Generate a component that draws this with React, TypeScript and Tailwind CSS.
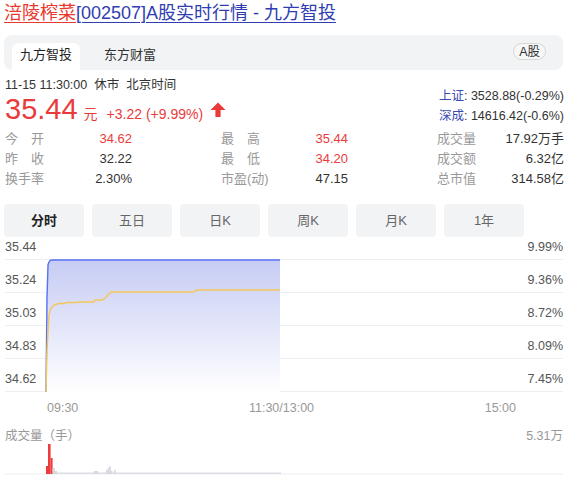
import React from 'react';

const FONT = '[font-family:"Liberation_Sans","Noto_Sans_CJK_SC",sans-serif]';

type Cell = { label: string; value: string; up?: boolean };

const stats: Cell[][] = [
  [
    { label: '今开', value: '34.62', up: true },
    { label: '最高', value: '35.44', up: true },
    { label: '成交量', value: '17.92万手' },
  ],
  [
    { label: '昨收', value: '32.22' },
    { label: '最低', value: '34.20', up: true },
    { label: '成交额', value: '6.32亿' },
  ],
  [
    { label: '换手率', value: '2.30%' },
    { label: '市盈(动)', value: '47.15' },
    { label: '总市值', value: '314.58亿' },
  ],
];

const periods = ['分时', '五日', '日K', '周K', '月K', '1年'];

const yRows = [
  { left: '35.44', right: '9.99%' },
  { left: '35.24', right: '9.36%' },
  { left: '35.03', right: '8.72%' },
  { left: '34.83', right: '8.09%' },
  { left: '34.62', right: '7.45%' },
];

// average price line, chart-local coords (x - 5, y - 237)
const avgPts = [
  [42, 155], [43, 113], [45, 78], [47, 71], [50, 68], [53, 67], [55, 66.5], [61, 66.5],
  [62, 65.5], [73, 65.5], [75, 65], [90, 65], [91, 63], [98, 63], [100, 62], [105, 57],
  [107, 55], [190, 55], [192, 53], [276, 53],
];

// volume bars: x, width, top (local to a 30px tall strip)
const volBars = [
  { x: 42, w: 2, top: 22, red: true },
  { x: 44, w: 2.6, top: 0, red: true },
  { x: 46.6, w: 2, top: 14, red: true },
  { x: 48.6, w: 2.3, top: 24, red: false },
  { x: 51, w: 2, top: 27, red: false },
  { x: 90, w: 4, top: 27, red: false },
  { x: 102, w: 1.6, top: 26, red: false },
  { x: 103.6, w: 1.6, top: 24, red: false },
  { x: 105.2, w: 1.6, top: 22, red: false },
  { x: 107, w: 1.4, top: 27, red: false },
  { x: 110, w: 1.6, top: 26, red: false },
];

const Label = ({ text }: { text: string }) =>
  text.length === 2 ? (
    <span className="flex w-[39px] justify-between text-[#999]">
      <span>{text[0]}</span>
      <span>{text[1]}</span>
    </span>
  ) : (
    <span className="text-[#999]">{text}</span>
  );

export default function App() {
  const avgPath = avgPts.map((p, i) => `${i ? 'L' : 'M'}${p[0]} ${p[1]}`).join(' ');
  const pricePath = 'M42 155 L43 60 L44 28 Q45 23 48 23 L276 23';

  return (
    <div className={`min-h-[482px] w-[586px] bg-white ${FONT} text-[#333]`}>
      <div className="ml-[4px] w-[560px]">
        {/* Title */}
        <div className="h-[26px] pt-[1px] text-[18px] leading-[25px]">
          <span className="text-[#e8392e] underline decoration-1 underline-offset-[3px]">涪陵榨菜</span>
          <span className="text-[#2f3db0] underline decoration-1 underline-offset-[3px]">[002507]A股实时行情 - 九方智投</span>
        </div>

        {/* Source tabs */}
        <div className="mt-[9px] flex h-[35px] w-[559px] items-end rounded-[8px] bg-[#f2f3f5] pl-[8px] text-[13px]">
          <div className="flex h-[27px] w-[68px] justify-center rounded-t-[6px] bg-white pt-[3px] leading-[18px] text-[#222]">
            九方智投
          </div>
          <div className="ml-[16px] flex h-[27px] w-[68px] justify-center pt-[3px] leading-[18px] text-[#333]">
            东方财富
          </div>
          <div className="ml-auto mr-[17px] mb-[10px] flex h-[17px] items-center rounded-full border border-[#d6d6d6] bg-[#f7f7f8] px-[5px] text-[12.5px] leading-[14px] text-[#333]">
            A股
          </div>
        </div>

        {/* Quote header */}
        <div className="mt-[6px] flex justify-between pl-[1px]">
          <div>
            <div className="text-[12.5px] leading-[18px] text-[#333]">
              11-15 11:30:00&nbsp;&nbsp;休市&nbsp;&nbsp;北京时间
            </div>
            <div className="flex h-[30px] items-baseline text-[#e93b3b]">
              <span className="text-[29px] leading-[30px]">35.44</span>
              <span className="ml-[6px] text-[14px]">元</span>
              <span className="ml-[9px] text-[14px]">+3.22 (+9.99%)</span>
              <svg className="ml-[7px] mt-[1px] self-center" width="16" height="15" viewBox="0 0 16 15">
                <path d="M8 0.5 L15.5 8 L10.6 8 L10.6 15 L5.4 15 L5.4 8 L0.5 8 Z" fill="#e93b3b" />
              </svg>
            </div>
          </div>
          <div className="flex flex-col items-end pt-[10px] text-[12.5px] leading-[20px]">
            <div>
              <span className="text-[#3a49b5]">上证</span>: 3528.88(-0.29%)
            </div>
            <div>
              <span className="text-[#3a49b5]">深成</span>: 14616.42(-0.6%)
            </div>
          </div>
        </div>

        {/* Stats */}
        <div className="mt-[3px] pl-[1px] text-[13px] leading-[20px]">
          {stats.map((row, r) => (
            <div key={r} className="grid grid-cols-[216px_216px_126px]">
              {row.map((c) => (
                <div key={c.label} className="flex w-[127px] justify-between">
                  <Label text={c.label} />
                  <span className={c.up ? 'text-[#e93b3b]' : 'text-[#333]'}>{c.value}</span>
                </div>
              ))}
            </div>
          ))}
        </div>

        {/* Period buttons */}
        <div className="mt-[15px] flex gap-[8px]">
          {periods.map((p, i) => (
            <div
              key={p}
              className={`flex h-[33px] w-[80px] items-center justify-center rounded-[4px] bg-[#f2f3f5] text-[13px] ${
                i === 0 ? 'font-bold text-[#222]' : 'text-[#666]'
              }`}
            >
              {p}
            </div>
          ))}
        </div>

        {/* Intraday chart */}
        <div className="relative w-[559px] pl-[1px] text-[12.5px] leading-[15px] text-[#555]">
          {yRows.map((row, i) => (
            <div
              key={row.left}
              className={`flex items-end justify-between border-b border-[#eeeff2] pb-[4px] ${
                i === 0 ? 'h-[23px]' : 'h-[33px]'
              }`}
            >
              <span>{row.left}</span>
              <span>{row.right}</span>
            </div>
          ))}
          <svg className="pointer-events-none absolute left-0 top-0" width="559" height="156" viewBox="0 0 559 156">
            <defs>
              <linearGradient id="priceFill" x1="0" y1="0" x2="0" y2="1">
                <stop offset="0" stopColor="#c6ccf4" />
                <stop offset="1" stopColor="#ffffff" />
              </linearGradient>
            </defs>
            <path d={`${pricePath} L276 155 L42 155 Z`} fill="url(#priceFill)" />
            <path d={pricePath} fill="none" stroke="#5672f2" strokeWidth="1.4" />
            <path d={avgPath} fill="none" stroke="#f2c75a" strokeWidth="1.4" />
          </svg>
        </div>

        {/* Time axis */}
        <div className="mt-[8px] flex w-[512px] justify-between pl-[43px] text-[12.5px] leading-[16px] text-[#999]">
          <span>09:30</span>
          <span>11:30/13:00</span>
          <span>15:00</span>
        </div>

        {/* Volume */}
        <div className="mt-[12px] flex w-[559px] justify-between pl-[1px] text-[12.5px] leading-[16px] text-[#999]">
          <span>成交量（手）</span>
          <span>5.31万</span>
        </div>
        <svg className="block" width="559" height="31" viewBox="0 0 559 31">
          <line x1="0" y1="30" x2="559" y2="30" stroke="#eeeff2" strokeWidth="1" />
          <rect x="42" y="28.5" width="235" height="1.5" fill="#dcdee3" />
          {volBars.map((b, i) => (
            <rect key={i} x={b.x} y={b.top} width={b.w} height={30 - b.top} fill={b.red ? '#ef3b3b' : '#d6d8de'} />
          ))}
        </svg>
      </div>
    </div>
  );
}
